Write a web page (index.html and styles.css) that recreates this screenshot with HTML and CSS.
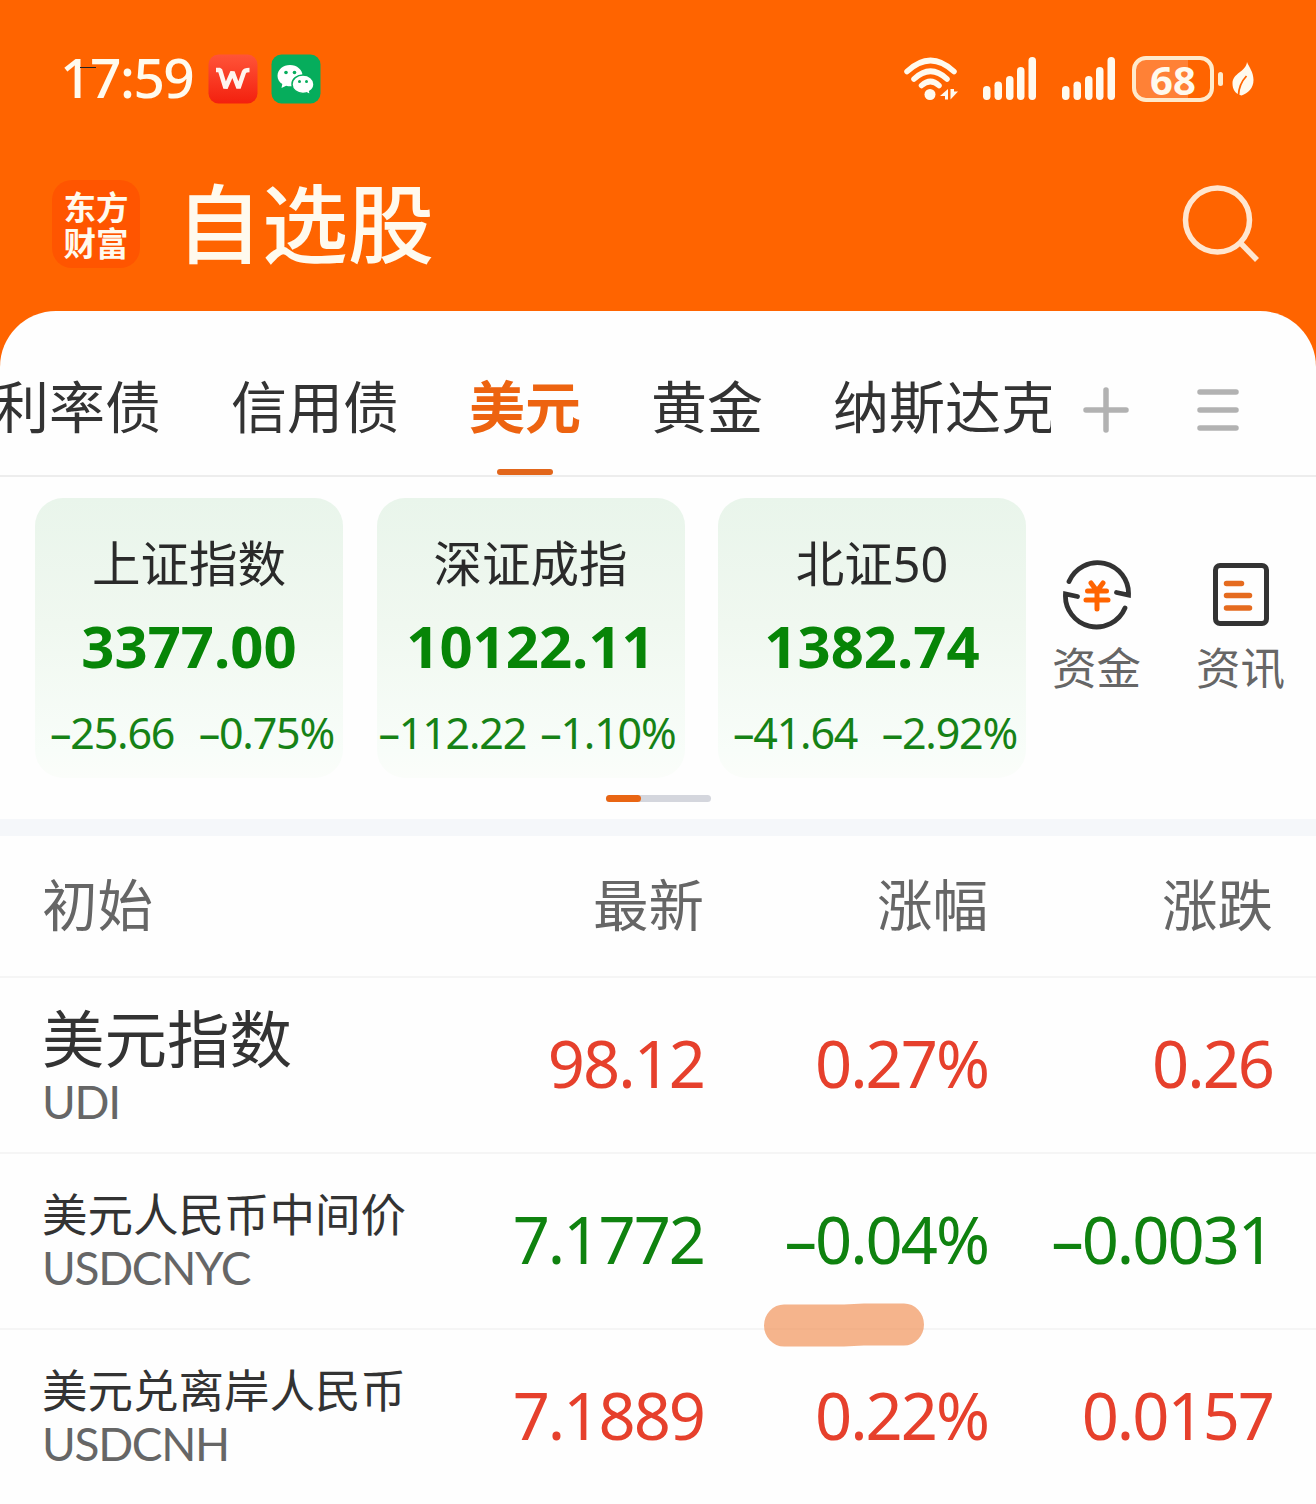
FILE: index.html
```
<!DOCTYPE html>
<html lang="zh-CN">
<head>
    <meta charset="UTF-8">
    <meta name="viewport" content="width=device-width, initial-scale=1.0">
    <title>自选股</title>
    <link rel="stylesheet" href="styles.css">
</head>
<body>
    <header class="header">
        <div class="status-bar">
            <div class="status-left">
                <span class="time">17:59</span>
                <svg class="app-icon" width="50" height="50" viewBox="0 0 50 50">
                    <defs>
                        <linearGradient id="wps" x1="0" y1="0" x2="0" y2="1">
                            <stop offset="0" stop-color="#ff5438"/>
                            <stop offset="1" stop-color="#f3200e"/>
                        </linearGradient>
                    </defs>
                    <rect x="0.5" y="0.5" width="49" height="49" rx="10" fill="url(#wps)"/>
                    <path d="M8 16h4L17.500 34L24.500 18L30.500 34L36 18q1-2 5.500-2" fill="none" stroke="#fff4ee" stroke-width="4.500" stroke-linejoin="bevel"/>
                </svg>
                <svg class="app-icon" width="50" height="50" viewBox="0 0 50 50">
                    <rect x="0.5" y="0.5" width="49" height="49" rx="10" fill="#06ad5c"/>
                    <path d="M19 11c-7 0-12.500 4.700-12.500 10.700 0 3.500 1.800 6.300 4.800 8.300l-.8 4 4.700-2.300c1.200.4 2.500.6 3.800.6 7 0 12.500-4.700 12.500-10.600S26 11 19 11z" fill="#fff"/>
                    <path d="M32 21c-6 0-11 4-11 9.200s5 9.200 11 9.200c1.200 0 2.400-.2 3.500-.5l4 2-.8-3.500c2.700-1.700 4.300-4.200 4.300-7.200 0-5.200-5-9.200-11-9.200z" fill="#fff" stroke="#06ad5c" stroke-width="1.500"/>
                    <circle cx="15" cy="18.500" r="1.800" fill="#06ad5c"/>
                    <circle cx="23.500" cy="18.500" r="1.800" fill="#06ad5c"/>
                    <circle cx="28.500" cy="27.500" r="1.500" fill="#06ad5c"/>
                    <circle cx="35.500" cy="27.500" r="1.500" fill="#06ad5c"/>
                </svg>
            </div>
            <div class="status-right">
                <svg width="56" height="46" viewBox="0 0 56 46" fill="none" stroke="#fffaee" stroke-width="5.500" stroke-linecap="round">
                    <path d="M4 15.500Q27.500-6.500 51 15.500"/>
                    <path d="M11 23Q27.500 7.500 44 23"/>
                    <path d="M18.500 29.500Q27.500 21.500 36 29.500"/>
                    <circle cx="27" cy="38.500" r="5.500" fill="#fffaee" stroke="none"/>
                    <path d="M45 33v10.500h-3v-3.500h-5zM47.500 33v10.500l7.500-8h-4v-2.500z" fill="#fffaee" stroke="none"/>
                </svg>
                <svg class="signal" width="54" height="46" viewBox="0 0 54 46" fill="#fffaee">
                    <rect x="0" y="30" width="7.500" height="14" rx="3.700"/>
                    <rect x="11.500" y="25.500" width="7.500" height="18.500" rx="3.700"/>
                    <rect x="23" y="20" width="7.500" height="24" rx="3.700"/>
                    <rect x="34" y="11" width="7.500" height="33" rx="3.700"/>
                    <rect x="45.500" y="1" width="7.500" height="43" rx="3.700"/>
                </svg>
                <svg class="signal" width="54" height="46" viewBox="0 0 54 46" fill="#fffaee">
                    <rect x="0" y="30" width="7.500" height="14" rx="3.700"/>
                    <rect x="11.500" y="25.500" width="7.500" height="18.500" rx="3.700"/>
                    <rect x="23" y="20" width="7.500" height="24" rx="3.700"/>
                    <rect x="34" y="11" width="7.500" height="33" rx="3.700"/>
                    <rect x="45.500" y="1" width="7.500" height="43" rx="3.700"/>
                </svg>
                <div class="battery">68</div>
                <div class="battery-tip"></div>
                <svg class="leaf" width="22" height="36" viewBox="0 0 22 36">
                    <path d="M15 1C17 6 21.500 11 21.500 19S16 32.500 9.500 34.500C3 33 .5 28 .5 22.500C.5 12 14 11 15 1z" fill="#fffaee"/>
                    <path d="M14.500 15Q7 23 6.500 34" fill="none" stroke="#ff6400" stroke-width="1.800"/>
                </svg>
            </div>
        </div>
        <div class="title-bar">
            <div class="logo"><div>东方</div><div>财富</div></div>
            <h1>自选股</h1>
            <svg class="search" width="80" height="80" viewBox="0 0 80 80" fill="none" stroke="#ffe6cf" stroke-width="5.500">
                <circle cx="35.500" cy="36" r="32"/>
                <path d="M58.500 59L75 76"/>
            </svg>
        </div>
    </header>

    <main class="panel">
        <nav class="nav">
            <div class="tabs">
                <span class="tab">利率债</span>
                <span class="tab">信用债</span>
                <span class="tab active">美元</span>
                <span class="tab">黄金</span>
                <span class="tab">纳斯达克</span>
            </div>
            <svg class="nav-add" width="46" height="46" viewBox="0 0 46 46" stroke="#b2b2b2" stroke-width="5.500" stroke-linecap="round">
                <path d="M23 3v40M3 23h40"/>
            </svg>
            <svg class="nav-menu" width="44" height="44" viewBox="0 0 44 44" stroke="#b2b2b2" stroke-width="5.500" stroke-linecap="round">
                <path d="M4 4h36M4 22h36M4 40h36"/>
            </svg>
        </nav>

        <section class="indices">
            <div class="card">
                <div class="card-name">上证指数</div>
                <div class="card-value">3377.00</div>
                <div class="card-change"><span>–25.66</span><span>–0.75%</span></div>
            </div>
            <div class="card">
                <div class="card-name">深证成指</div>
                <div class="card-value">10122.11</div>
                <div class="card-change tight"><span>–112.22</span><span>–1.10%</span></div>
            </div>
            <div class="card">
                <div class="card-name">北证50</div>
                <div class="card-value">1382.74</div>
                <div class="card-change"><span>–41.64</span><span>–2.92%</span></div>
            </div>
            <div class="shortcuts">
                <div class="shortcut">
                    <svg width="72" height="72" viewBox="0 0 72 72" fill="none" stroke="#333" stroke-width="4.800" stroke-linecap="round">
                        <path d="M8 22.500A31 31 0 0 1 67.500 36L55.500 33.500"/>
                        <path d="M64 49A31 31 0 0 1 4.500 35L16.500 37.500"/>
                        <path d="M30 24l6 8 6-8M26.500 32h19M25 41h22M36 32v18" stroke="#ff6400" stroke-width="5"/>
                    </svg>
                    <span>资金</span>
                </div>
                <div class="shortcut">
                    <svg width="72" height="72" viewBox="0 0 72 72" fill="none" stroke-linecap="round">
                        <rect x="10.500" y="6.500" width="51" height="58" rx="4.500" stroke="#333" stroke-width="5"/>
                        <path d="M21.500 24.500h15M21.500 36.500h23M21.500 49h23" stroke="#e56b1f" stroke-width="5.500"/>
                    </svg>
                    <span>资讯</span>
                </div>
            </div>
        </section>
        <div class="pager"><div class="pager-thumb"></div></div>

        <section class="quotes">
            <div class="row head">
                <div>初始</div>
                <div class="num">最新</div>
                <div class="num">涨幅</div>
                <div class="num">涨跌</div>
            </div>
            <div class="row up">
                <div class="stock">
                    <div class="name large">美元指数</div>
                    <div class="code">UDI</div>
                </div>
                <div class="num">98.12</div>
                <div class="num">0.27%</div>
                <div class="num">0.26</div>
            </div>
            <div class="row down">
                <div class="stock">
                    <div class="name">美元人民币中间价</div>
                    <div class="code">USDCNYC</div>
                </div>
                <div class="num">7.1772</div>
                <div class="num">–0.04%</div>
                <div class="num">–0.0031</div>
                <svg class="marker" width="162" height="44" viewBox="0 0 162 44">
                    <path d="M20 1.500L80 1.500L100 .5H140A20 21 0 0 1 140 42.500H100L80 43.500H20A20 21 0 0 1 20 1.500z" fill="#f09155" fill-opacity="0.68"/>
                </svg>
            </div>
            <div class="row up">
                <div class="stock">
                    <div class="name">美元兑离岸人民币</div>
                    <div class="code">USDCNH</div>
                </div>
                <div class="num">7.1889</div>
                <div class="num">0.22%</div>
                <div class="num">0.0157</div>
            </div>
        </section>
    </main>
</body>
</html>
```
FILE: styles.css
```
* {
    box-sizing: border-box;
}
body {
    margin: 0;
    width: 1316px;
    height: 1504px;
    overflow: hidden;
    font-family: "Noto Sans", "Noto Sans CJK SC", sans-serif;
    color: #333;
    background-color: #ff6400;
}
svg {
    display: block;
    flex-shrink: 0;
}

/* 顶部 */
.header {
    height: 311px;
    color: #fffaee;
}
.status-bar {
    height: 158px;
    padding: 0 62px 0 60px;
    display: flex;
    align-items: center;
    justify-content: space-between;
}
.status-left,
.status-right {
    display: flex;
    align-items: center;
}
.time {
    position: relative;
    width: 148px;
    margin-top: -4px;
    font-size: 55px;
    line-height: 60px;
    font-weight: 500;
    letter-spacing: -1.5px;
}
.time::after {
    content: "";
    position: absolute;
    left: 20px;
    top: 20px;
    width: 16px;
    height: 1px;
    background-color: #222;
}
.app-icon {
    margin-right: 13px;
}
.signal {
    margin-left: 25px;
}
.status-right svg:first-child {
    margin-right: -1px;
}
.battery {
    width: 82px;
    height: 46px;
    margin-left: 16px;
    padding-top: 1px;
    border: 4px solid #ffeacb;
    border-radius: 14px;
    background: linear-gradient(to right, #ff8136 70%, #ff6400 70%);
    font-size: 40px;
    line-height: 38px;
    font-weight: 700;
    text-align: center;
}
.battery-tip {
    width: 5px;
    height: 14px;
    margin: 0 9px 0 4px;
    border-radius: 3px;
    background-color: #ffeacb;
}
.title-bar {
    height: 132px;
    padding: 0 54px 0 52px;
    display: flex;
    align-items: center;
}
.logo {
    width: 88px;
    height: 88px;
    padding-top: 8px;
    border-radius: 20px;
    background-color: #ff5500;
    font-family: "Noto Sans CJK SC", sans-serif;
    font-size: 32.5px;
    line-height: 36px;
    font-weight: 700;
    text-align: center;
}
h1 {
    margin: -9px auto 0 36px;
    font-family: "Noto Sans CJK SC", sans-serif;
    font-size: 86px;
    line-height: 100px;
    font-weight: 500;
}

/* 分组标签 */
.panel {
    height: 1193px;
    border-radius: 56px 56px 0 0;
    background-color: #fefefe;
    overflow: hidden;
}
.nav {
    height: 166px;
    display: flex;
    align-items: center;
    border-bottom: 2px solid #ededed;
}
.tabs {
    width: 1051px;
    height: 164px;
    padding-top: 60px;
    display: flex;
    gap: 70px;
    overflow: hidden;
    white-space: nowrap;
    font-size: 56px;
    line-height: 70px;
}
.tab {
    position: relative;
    flex-shrink: 0;
}
.tab:first-child {
    margin-left: -7px;
}
.tab.active {
    color: #ed6310;
    font-weight: 700;
}
.tab.active::after {
    content: "";
    position: absolute;
    left: 28px;
    top: 98px;
    width: 56px;
    height: 6px;
    border-radius: 3px;
    background-color: #e2661b;
}
.nav-add {
    margin: 34px 0 0 32px;
}
.nav-menu {
    margin: 34px 0 0 67px;
}

/* 指数卡片 */
.indices {
    display: flex;
    gap: 33.5px;
    padding: 21px 0 0 35px;
}
.card {
    width: 308px;
    height: 280px;
    padding-top: 35px;
    flex-shrink: 0;
    border-radius: 28px;
    background: linear-gradient(#e9f5eb, #f0f8f0 45%, #f8fdf9 90%, #fbfdfa);
    text-align: center;
    white-space: nowrap;
}
.card-name {
    font-size: 48.5px;
    line-height: 60px;
    color: #2a2a2a;
}
.card-value {
    font-size: 58px;
    line-height: 64px;
    margin-top: 21px;
    font-weight: 700;
    color: #078507;
}
.card-change {
    display: flex;
    justify-content: space-between;
    padding: 0 9px 0 15px;
    margin-top: 30px;
    font-size: 43px;
    line-height: 50px;
    letter-spacing: -1.2px;
    color: #168216;
}
.card-change.tight {
    padding-left: 2px;
}
.shortcuts {
    display: flex;
    gap: 54px;
    margin: 61px 0 0 -8px;
}
.shortcut {
    width: 90px;
    display: flex;
    flex-direction: column;
    align-items: center;
    font-size: 44.5px;
    line-height: 56px;
    color: #666;
}
.shortcut span {
    margin-top: 9px;
}
.pager {
    width: 105px;
    height: 7px;
    margin: 17px auto 17px;
    border-radius: 4px;
    background-color: #d4d6dd;
}
.pager-thumb {
    width: 35px;
    height: 7px;
    border-radius: 4px;
    background-color: #e96513;
}

/* 行情列表 */
.quotes {
    border-top: 17px solid #f5f7fa;
}
.row {
    position: relative;
    height: 176px;
    padding-left: 42px;
    display: grid;
    grid-template-columns: 400px 262px 284px 285px;
    align-items: center;
    border-bottom: 2px solid #f5f5f5;
    font-size: 65px;
    line-height: 76px;
}
.row.head {
    height: 142px;
    padding-bottom: 3px;
    font-size: 55.5px;
    color: #666;
}
.num {
    text-align: right;
    white-space: nowrap;
}
.up .num,
.down .num {
    margin-top: -5px;
    letter-spacing: -2px;
}
.up .num {
    color: #e6402c;
}
.down .num {
    color: #0f820f;
}
.name {
    font-size: 45.5px;
    line-height: 54px;
    white-space: nowrap;
}
.name.large {
    font-size: 62.5px;
    line-height: 74px;
}
.code {
    font-family: Lato, sans-serif;
    font-size: 46px;
    line-height: 54px;
    letter-spacing: -1.3px;
    color: #666;
}
.name.large + .code {
    margin-top: -1px;
}
.marker {
    position: absolute;
    left: 764px;
    top: 149px;
    z-index: 1;
}
```
